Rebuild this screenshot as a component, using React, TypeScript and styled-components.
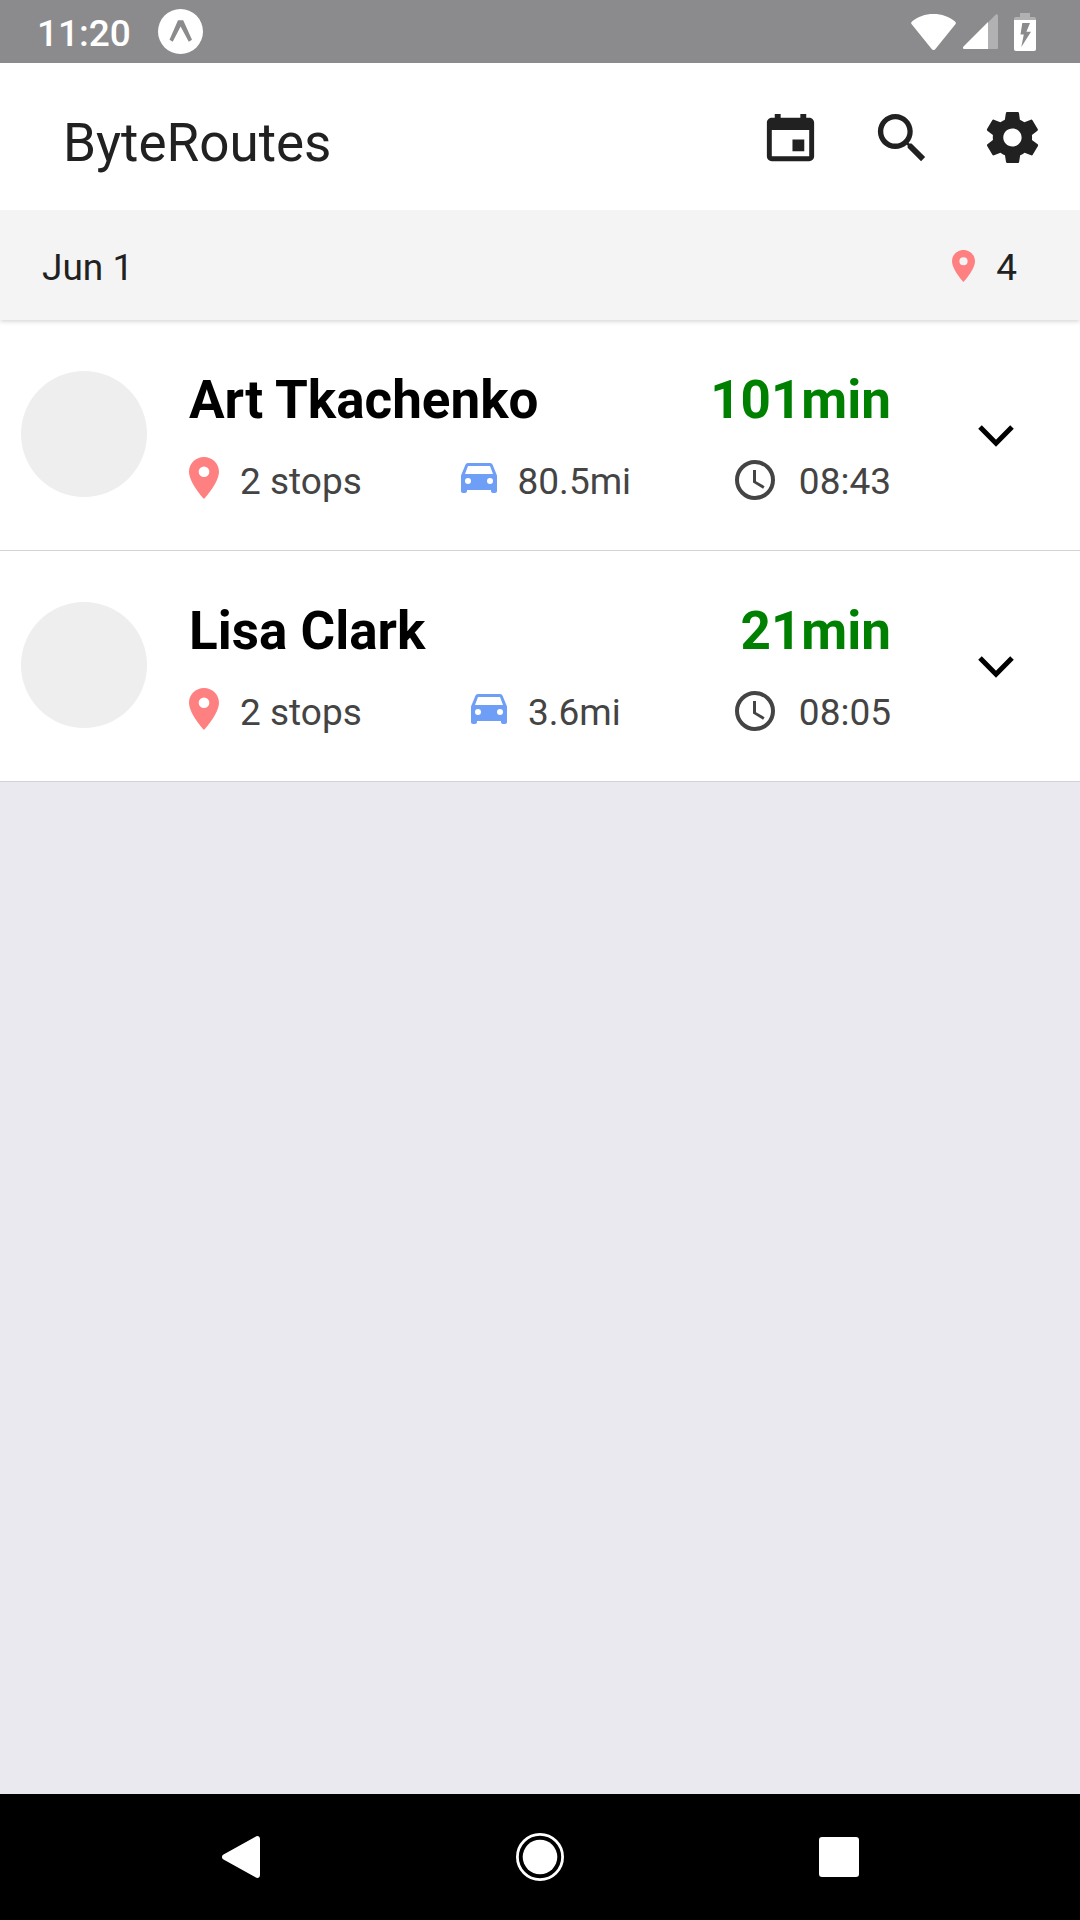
import React from "react";
import styled, { createGlobalStyle } from "styled-components";
import {
  IoMdCalendar,
  IoMdSearch,
  IoMdSettings,
} from "react-icons/io";

const GlobalStyle = createGlobalStyle`
  * { box-sizing: border-box; }
  body {
    margin: 0;
    background: #e9e9ef;
    font-family: Roboto, "Noto Sans", sans-serif;
  }
  button {
    border: 0;
    padding: 0;
    background: none;
    color: inherit;
    cursor: pointer;
  }
  svg { display: block; flex: none; }
`;

const Screen = styled.div`
  display: flex;
  flex-direction: column;
  min-height: 100vh;
`;

const StatusBar = styled.div`
  display: flex;
  align-items: center;
  justify-content: space-between;
  height: 63px;
  padding: 0 44px 0 37px;
  background: #8b8b8d;
  color: #fff;
`;

const StatusGroup = styled.div<{ $gap: number }>`
  display: flex;
  align-items: center;
  gap: ${(p) => p.$gap}px;
`;

const Clock = styled.time`
  padding-top: 3px;
  font-size: 37px;
  font-weight: 500;
  line-height: 43px;
`;

const AppBar = styled.header`
  position: relative;
  z-index: 1;
  display: flex;
  align-items: center;
  justify-content: space-between;
  height: 147px;
  padding: 2px 36px 0 63px;
  background: #fff;
  color: #212121;
`;

const Title = styled.h1`
  margin: 0;
  padding-top: 10px;
  font-size: 53px;
  font-weight: 400;
  line-height: 62px;
`;

const Toolbar = styled.div`
  display: flex;
  gap: 48px;
`;

const ToolButton = styled.button`
  font-size: 63px;
`;

const DayBar = styled.section`
  position: relative;
  display: flex;
  align-items: center;
  justify-content: space-between;
  height: 110px;
  padding: 4px 63px 0 42px;
  background: #f4f4f4;
  color: #212121;
  font-size: 37px;
  line-height: 43px;
  box-shadow: 0 1px 5px rgba(0, 0, 0, 0.2);
`;

const DayCount = styled.span`
  display: flex;
  align-items: center;
  gap: 21px;

  svg { margin-bottom: 2px; }
`;

const RouteList = styled.ul`
  flex: 1;
  margin: 0;
  padding: 0;
  list-style: none;
`;

const RouteRow = styled.li`
  display: flex;
  align-items: center;
  padding: 49px 0 45px 21px;
  background: #fff;
  border-bottom: 1px solid #d3d3d6;
`;

const Avatar = styled.div`
  flex: none;
  width: 126px;
  height: 126px;
  margin: 0 42px 6px 0;
  border-radius: 50%;
  background: #eee;
`;

const RouteInfo = styled.div`
  flex: 1;
  display: flex;
  flex-direction: column;
  gap: 26px;
`;

const RouteHeading = styled.div`
  display: flex;
  justify-content: space-between;
  font-size: 53px;
  font-weight: 700;
  line-height: 62px;
`;

const DriverName = styled.h2`
  margin: 0;
  font: inherit;
  color: #000;
`;

const Duration = styled.span`
  color: #008000;
`;

const RouteDetails = styled.div`
  display: flex;
  align-items: center;
  justify-content: space-between;
  height: 48px;
`;

const Detail = styled.span`
  display: flex;
  align-items: center;
  gap: 21px;
  color: #444;
  font-size: 37px;
  line-height: 43px;

  svg { margin-bottom: 6px; }
`;

const ExpandButton = styled.button`
  display: flex;
  align-items: center;
  justify-content: center;
  width: 168px;
  height: 126px;
  margin: 0 0 2px 21px;
`;

const NavBar = styled.nav`
  display: flex;
  height: 126px;
  padding: 0 91px;
  background: #000;
  color: #fff;
`;

const NavButton = styled.button`
  flex: 1;
  display: flex;
  align-items: center;
  justify-content: center;
`;

function Pin({ width, height }: { width: number; height: number }) {
  return (
    <svg width={width} height={height} viewBox="5 2 14 20" preserveAspectRatio="none" fill="#ff8080">
      <path d="M12 2C8.13 2 5 5.13 5 9c0 5.25 7 13 7 13s7-7.75 7-13c0-3.87-3.13-7-7-7zm0 9.5a2.5 2.5 0 0 1 0-5 2.5 2.5 0 0 1 0 5z" />
    </svg>
  );
}

function Car() {
  return (
    <svg width="36" height="30" viewBox="0 0 36 30" fill="#6f9ef6">
      <path
        fillRule="evenodd"
        d="M7 0h22c1.300 0 2.300.8 2.700 2L36 12.500V28c0 1.200-.8 2-2 2h-2c-1.200 0-2-.8-2-2v-1H6v1c0 1.200-.8 2-2 2H2c-1.200 0-2-.8-2-2V12.500L4.300 2C4.700.8 5.700 0 7 0zM7 3 4 11h28L29 3zM7 15a3 3 0 1 0 0 6 3 3 0 0 0 0-6zM29 15a3 3 0 1 0 0 6 3 3 0 0 0 0-6z"
      />
    </svg>
  );
}

function StartTime() {
  return (
    <svg width="48" height="44" viewBox="-5 -4 48 44">
      <circle cx="20" cy="20" r="18" fill="none" stroke="#444" strokeWidth="4" />
      <path d="M18 10h3v11.200l8.600 5-1.500 2.500L18 22.600z" fill="#444" />
    </svg>
  );
}

function ExpoBadge() {
  return (
    <svg width="45" height="45" viewBox="0 0 45 45">
      <circle cx="22.5" cy="22.5" r="22.5" fill="#fff" />
      <path d="M20 11.300h5.200L34 30.800l-3.200 2L22.600 17.500 14.700 32.800 11.500 30.800z" fill="#8b8b8d" />
    </svg>
  );
}

function Wifi() {
  return (
    <svg width="45" height="36" viewBox="0 0 45 36" fill="#fff">
      <path d="M1 7.500C7 2.500 14 0 22.500 0S38 2.500 44 7.500c1 .8 1.100 1.800.4 2.800L24.200 35.200c-1 1.100-2.300 1.100-3.300 0L.7 10.300c-.8-1-.7-2 .3-2.800z" />
    </svg>
  );
}

function Signal() {
  return (
    <svg width="35" height="35" viewBox="0 0 35 35">
      <path d="M25 8.500 32.500.7C33.600-.3 35 .2 35 1.600V33.500c0 1-.5 1.500-1.500 1.500H25z" fill="#b1b1b3" />
      <path d="M25 8v27H1.500C0 35-.5 33.500.5 32.500z" fill="#fff" />
    </svg>
  );
}

function Battery() {
  return (
    <svg width="22" height="38" viewBox="0 0 22 38">
      <path d="M6 0h10v4h4c1.300 0 2 .7 2 2v1H0V6c0-1.300.7-2 2-2h4z" fill="#b1b1b3" />
      <path d="M0 7h22v29c0 1.300-.7 2-2 2H2c-1.300 0-2-.7-2-2z" fill="#fff" />
      <path d="M8.300 10H16l-3.600 8.800H17L7.300 34l2.500-12.500H6.500z" fill="#8b8b8d" />
    </svg>
  );
}

function Chevron() {
  return (
    <svg width="36" height="22" viewBox="0 0 36 22" fill="none" stroke="#000" strokeWidth="5">
      <path d="M2 2 18 18.200 34 2" />
    </svg>
  );
}

const routes = [
  { driver: "Art Tkachenko", duration: "101min", stops: "2 stops", distance: "80.5mi", start: "08:43" },
  { driver: "Lisa Clark", duration: "21min", stops: "2 stops", distance: "3.6mi", start: "08:05" },
];

export default function App() {
  return (
    <>
      <GlobalStyle />
      <Screen>
        <StatusBar>
          <StatusGroup $gap={27}>
            <Clock>11:20</Clock>
            <ExpoBadge />
          </StatusGroup>
          <StatusGroup $gap={16}>
            <StatusGroup $gap={7}>
              <Wifi />
              <Signal />
            </StatusGroup>
            <Battery />
          </StatusGroup>
        </StatusBar>

        <AppBar>
          <Title>ByteRoutes</Title>
          <Toolbar>
            <ToolButton aria-label="Calendar"><IoMdCalendar /></ToolButton>
            <ToolButton aria-label="Search"><IoMdSearch /></ToolButton>
            <ToolButton aria-label="Settings"><IoMdSettings /></ToolButton>
          </Toolbar>
        </AppBar>

        <DayBar>
          <span>Jun 1</span>
          <DayCount>
            <Pin width={23} height={32} />
            <span>4</span>
          </DayCount>
        </DayBar>

        <RouteList>
          {routes.map((route) => (
            <RouteRow key={route.driver}>
              <Avatar />
              <RouteInfo>
                <RouteHeading>
                  <DriverName>{route.driver}</DriverName>
                  <Duration>{route.duration}</Duration>
                </RouteHeading>
                <RouteDetails>
                  <Detail>
                    <Pin width={30} height={42} />
                    {route.stops}
                  </Detail>
                  <Detail>
                    <Car />
                    {route.distance}
                  </Detail>
                  <Detail>
                    <StartTime />
                    {route.start}
                  </Detail>
                </RouteDetails>
              </RouteInfo>
              <ExpandButton aria-label={`Show stops for ${route.driver}`}>
                <Chevron />
              </ExpandButton>
            </RouteRow>
          ))}
        </RouteList>

        <NavBar>
          <NavButton aria-label="Back">
            <svg width="38" height="42" viewBox="0 0 38 42" fill="#fff">
              <path d="M33.500.7C35.500-.6 38 .3 38 3v36c0 2.700-2.500 3.600-4.500 2.300L1.500 23.500c-2-1.200-2-3.800 0-5z" />
            </svg>
          </NavButton>
          <NavButton aria-label="Home">
            <svg width="48" height="48" viewBox="0 0 48 48">
              <circle cx="24" cy="24" r="22.600" fill="none" stroke="#fff" strokeWidth="2.800" />
              <circle cx="24" cy="24" r="17.300" fill="#fff" />
            </svg>
          </NavButton>
          <NavButton aria-label="Recent apps">
            <svg width="40" height="40" viewBox="0 0 40 40" fill="#fff">
              <rect width="40" height="40" rx="3" />
            </svg>
          </NavButton>
        </NavBar>
      </Screen>
    </>
  );
}
